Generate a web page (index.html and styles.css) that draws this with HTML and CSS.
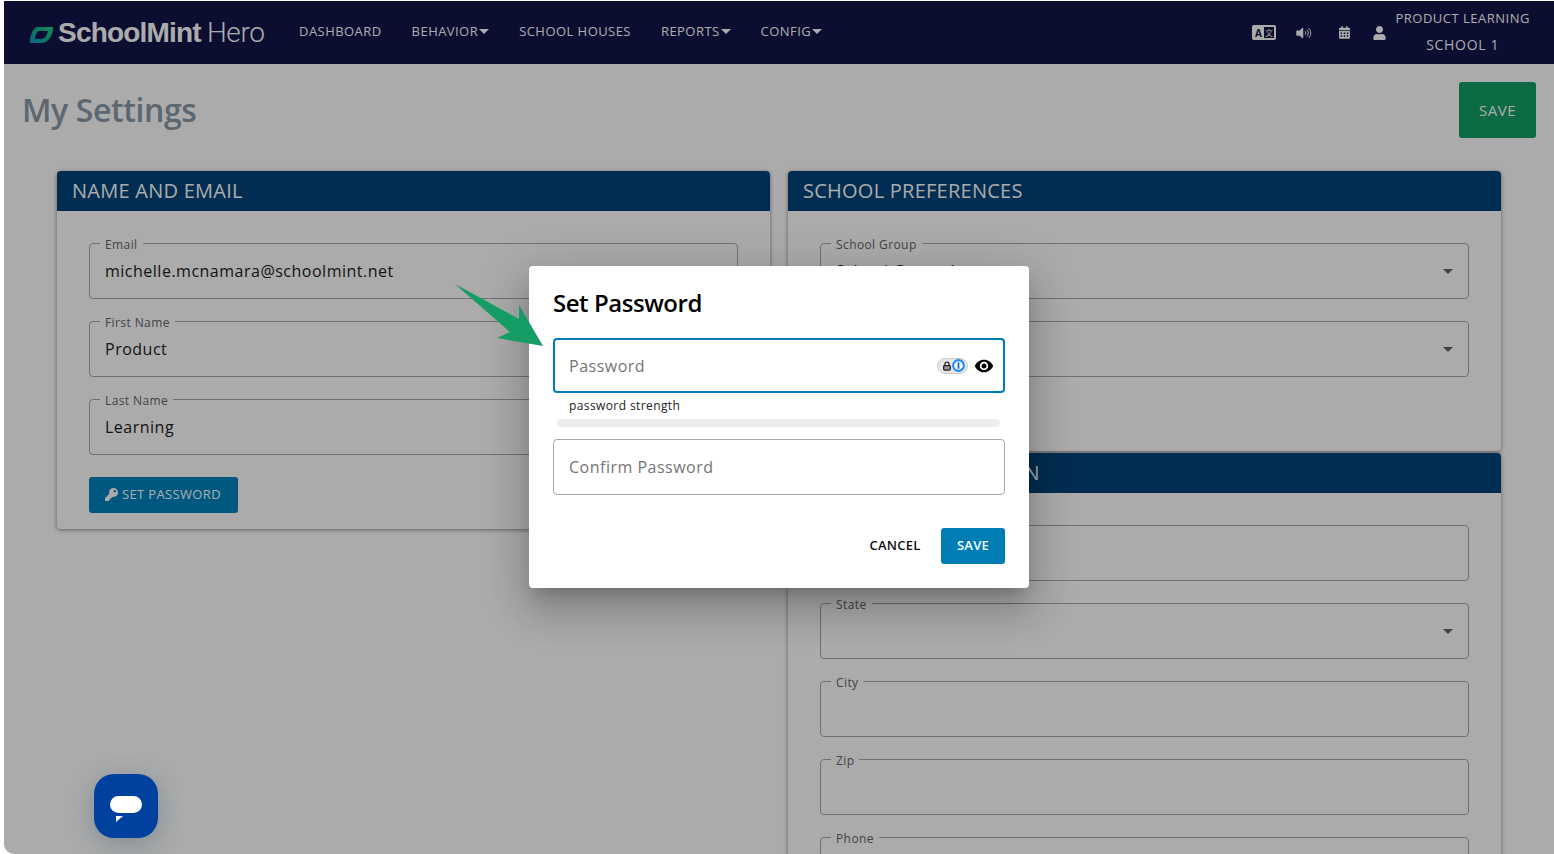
FILE: index.html
```html
<!DOCTYPE html>
<html lang="en">
<head>
  <meta charset="UTF-8" />
  <title>My Settings</title>
  <link rel="stylesheet" href="styles.css">
</head>
<body>
  <div class="window">
    <header class="topbar">
      <div class="logo">
        <svg class="leaf" viewBox="0 0 23 16">
          <defs>
            <linearGradient id="leafFill" x1="0" y1="1" x2="1" y2="0">
              <stop offset="0" stop-color="#0f9fd0"/>
              <stop offset="0.55" stop-color="#17b08c"/>
              <stop offset="1" stop-color="#1fd98f"/>
            </linearGradient>
          </defs>
          <path fill="url(#leafFill)" fill-rule="evenodd" d="M8 0H23C23 8 19 16 11 16H0C0 8 3 0 8 0ZM9 4C7 4 5.500 8 5 12H11C15 12 17 8 18 4Z"/>
        </svg>
        <span class="logo-bold">SchoolMint</span><span class="logo-light">Hero</span>
      </div>
      <nav class="nav">
        <a href="#">Dashboard</a>
        <a href="#" class="has-caret">Behavior</a>
        <a href="#">School Houses</a>
        <a href="#" class="has-caret">Reports</a>
        <a href="#" class="has-caret">Config</a>
      </nav>
      <div class="tools">
        <svg class="ico-lang" viewBox="0 0 24 15">
          <rect width="24" height="15" rx="2" fill="#fff"/>
          <rect x="12" y="2" width="10" height="11" fill="#0f1240"/>
          <text x="6.500" y="11.500" class="lang-a">A</text>
          <text x="17" y="11" class="lang-b">文</text>
        </svg>
        <svg class="ico-sound" viewBox="0 0 640 512">
          <path fill="#fff" d="M215 71L126 160H24c-13 0-24 11-24 24v144c0 13 11 24 24 24h102l89 89c15 15 41 4 41-17V88c0-21-26-32-41-17z"/>
          <path fill="none" stroke="#fff" stroke-width="36" stroke-linecap="round" d="M330 200c30 30 30 82 0 112M400 140c60 60 60 172 0 232M470 90c85 90 85 242 0 332"/>
        </svg>
        <svg class="ico-cal" viewBox="0 0 448 512">
          <path fill="#fff" d="M0 464c0 26.500 21.500 48 48 48h352c26.500 0 48-21.500 48-48V192H0zM64 256h64v56H64zm0 112h64v56H64zm128-112h64v56h-64zm0 112h64v56h-64zm128-112h64v56h-64zm0 112h64v56h-64zM400 64h-48V16c0-8.800-7.200-16-16-16h-32c-8.800 0-16 7.200-16 16v48H160V16c0-8.800-7.200-16-16-16h-32c-8.800 0-16 7.200-16 16v48H48C21.500 64 0 85.500 0 112v48h448v-48c0-26.500-21.500-48-48-48z" fill-rule="evenodd"/>
        </svg>
        <svg class="ico-user" viewBox="0 0 448 512">
          <path fill="#fff" d="M224 256c70.700 0 128-57.300 128-128S294.700 0 224 0 96 57.300 96 128s57.300 128 128 128zm89.600 32h-16.700c-22.200 10.200-46.900 16-72.900 16s-50.600-5.800-72.900-16h-16.700C60.200 288 0 348.200 0 422.400V464c0 26.500 21.500 48 48 48h352c26.500 0 48-21.500 48-48v-41.600c0-74.200-60.200-134.400-134.400-134.400z"/>
        </svg>
        <div class="account">
          <span>Product Learning</span>
          <span class="account-school">School 1</span>
        </div>
      </div>
    </header>

    <main class="page">
      <div class="title-row">
        <h1>My Settings</h1>
        <button class="btn-save-page">Save</button>
      </div>

      <div class="columns">
        <section class="panel">
          <h2>Name and Email</h2>
          <div class="panel-body">
            <div class="field"><label>Email</label><span class="value">michelle.mcnamara@schoolmint.net</span></div>
            <div class="field"><label>First Name</label><span class="value">Product</span></div>
            <div class="field"><label>Last Name</label><span class="value">Learning</span></div>
            <button class="btn-set">
              <svg class="ico-key" viewBox="0 0 512 512"><path fill="#fff" d="M512 176c0 97.200-78.800 176-176 176-11.200 0-22.200-1.100-32.800-3.100l-24 27A24 24 0 0 1 261.200 384H224v40c0 13.300-10.700 24-24 24h-40v40c0 13.300-10.700 24-24 24H24c-13.300 0-24-10.700-24-24v-78.100c0-6.400 2.500-12.500 7-17l161.800-161.800C163.100 213.800 160 195.300 160 176 160 78.800 238.800 0 336 0c97.500 0 176 78.500 176 176zM336 128c0 26.500 21.500 48 48 48s48-21.500 48-48-21.500-48-48-48-48 21.500-48 48z"/></svg>
              Set Password
            </button>
          </div>
        </section>

        <div class="right-col">
          <section class="panel">
            <h2>School Preferences</h2>
            <div class="panel-body tall">
              <div class="field select"><label>School Group</label><span class="value">School Group 1</span></div>
              <div class="field select"><label>School</label><span class="value">School 1</span></div>
            </div>
          </section>
          <section class="panel">
            <h2 class="address-head">Address Information</h2>
            <div class="panel-body">
              <div class="field"><label>Address</label></div>
              <div class="field select"><label>State</label></div>
              <div class="field"><label>City</label></div>
              <div class="field"><label>Zip</label></div>
              <div class="field"><label>Phone</label></div>
            </div>
          </section>
        </div>
      </div>
    </main>

    <div class="overlay">
      <div class="modal">
        <h3>Set Password</h3>
        <div class="pw-input">
          <span class="placeholder">Password</span>
          <span class="onepass">
            <svg class="op-lock" viewBox="0 0 12 12">
              <path fill="none" stroke="#222" stroke-width="1.500" d="M3.500 6V3.800a2.500 2.500 0 0 1 5 0V6"/>
              <rect x="2" y="5.500" width="8" height="5.500" rx="1" fill="#999" stroke="#222" stroke-width="1.500"/>
            </svg>
            <svg class="op-mark" viewBox="0 0 14 14">
              <circle cx="7" cy="7" r="5.800" fill="#fff" stroke="#1a8cff" stroke-width="2.200"/>
              <rect x="6.100" y="3.500" width="1.800" height="7" fill="#0a5cb8"/>
            </svg>
          </span>
          <svg class="ico-eye" viewBox="0 0 24 24"><path d="M12 4.500C7 4.500 2.700 7.600 1 12c1.700 4.400 6 7.500 11 7.500s9.300-3.100 11-7.500c-1.700-4.400-6-7.500-11-7.500zM12 17c-2.800 0-5-2.200-5-5s2.200-5 5-5 5 2.200 5 5-2.200 5-5 5zm0-8c-1.700 0-3 1.300-3 3s1.300 3 3 3 3-1.300 3-3-1.300-3-3-3z"/></svg>
        </div>
        <div class="strength-label">password strength</div>
        <div class="strength-bar"></div>
        <div class="pw-confirm"><span class="placeholder">Confirm Password</span></div>
        <div class="modal-actions">
          <button class="btn-cancel">Cancel</button>
          <button class="btn-modal-save">Save</button>
        </div>
      </div>
    </div>

    <!-- arrow pointing at the password box -->
    <svg class="arrow" viewBox="0 0 90 64">
      <polygon points="0,0 64,35 64,21 88,62 42,54 55,48" fill="#169c65"/>
    </svg>

    <div class="chat-btn">
      <svg viewBox="0 0 32 28" class="chat-ico">
        <rect x="0" y="0" width="32" height="17" rx="8.500" fill="#fff"/>
        <polygon points="6,20 13,20 6,26" fill="#fff"/>
      </svg>
    </div>
  </div>
</body>
</html>
```

FILE: styles.css
```css
* {
  box-sizing: border-box;
}

body {
  margin: 0;
  height: 854px;
  background: #fff;
  font-family: "Open Sans", sans-serif;
  overflow: hidden;
}

.window {
  position: relative;
  margin: 1px 0 0 4px;
  height: 853px;
  overflow: hidden;
  border-bottom-left-radius: 10px;
  background: #fff;
}

/* top bar */
.topbar {
  display: flex;
  align-items: center;
  height: 63px;
  padding: 0 24px 0 26px;
  background: #11144a;
  color: #fff;
}

.logo {
  display: flex;
  align-items: center;
  width: 269px;
  font-family: "Liberation Sans", sans-serif;
  font-size: 28px;
}

.leaf {
  width: 23px;
  height: 16px;
  margin: 4px 5px 0 0;
}

.logo-bold {
  font-weight: 700;
  letter-spacing: -0.8px;
}

.logo-light {
  margin-left: 6px;
  font-family: Roboto, sans-serif;
  font-weight: 300;
  letter-spacing: -0.4px;
}

.nav {
  display: flex;
  gap: 30px;
  margin-bottom: 3px;
}

.nav a {
  display: flex;
  align-items: center;
  color: #fff;
  font-size: 13px;
  font-weight: 400;
  letter-spacing: 0.45px;
  text-decoration: none;
  text-transform: uppercase;
}

.has-caret::after {
  content: "";
  margin: 1px 0 0 1px;
  border-top: 5px solid #fff;
  border-left: 5px solid transparent;
  border-right: 5px solid transparent;
}

.tools {
  display: flex;
  align-items: center;
  margin-left: auto;
}

.ico-lang {
  width: 24px;
  height: 15px;
  margin-right: 20px;
}

.lang-a {
  font: 700 10px "Open Sans", sans-serif;
  fill: #0f1240;
  text-anchor: middle;
}

.lang-b {
  font: 400 8px "Noto Sans CJK SC", sans-serif;
  fill: #fff;
  text-anchor: middle;
}

.ico-sound {
  width: 18px;
  height: 14px;
  margin-right: 25px;
}

.ico-cal {
  width: 11px;
  height: 13px;
  margin-right: 23px;
}

.ico-user {
  width: 13px;
  height: 14px;
  margin-right: 9px;
}

.account {
  display: flex;
  flex-direction: column;
  align-items: center;
  gap: 9px;
  margin-bottom: 2px;
  font-size: 13px;
  font-weight: 400;
  line-height: 18px;
  letter-spacing: 0.5px;
  text-transform: uppercase;
}

.account-school {
  font-size: 14px;
  letter-spacing: 0.7px;
}

/* page */
.page {
  padding: 18px 18px 0 18px;
}

.title-row {
  display: flex;
  justify-content: space-between;
  align-items: center;
}

h1 {
  margin: 0 0 2px;
  color: #8a9aa8;
  font-size: 32px;
  font-weight: 600;
  letter-spacing: -0.4px;
}

.btn-save-page {
  width: 77px;
  height: 56px;
  padding-bottom: 2px;
  border: none;
  border-radius: 3px;
  background: #14a065;
  color: #fff;
  font: 400 15px "Open Sans", sans-serif;
  letter-spacing: 0.5px;
  text-transform: uppercase;
}

.columns {
  display: grid;
  grid-template-columns: 713px 713px;
  gap: 18px;
  align-items: start;
  margin: 33px 0 0 35px;
}

.right-col {
  display: flex;
  flex-direction: column;
  gap: 2px;
}

.panel {
  border-radius: 4px;
  background: #fff;
  box-shadow: 0 1px 4px rgba(0, 0, 0, 0.45);
}

.panel h2 {
  margin: 0;
  height: 40px;
  padding: 0 15px;
  border-radius: 4px 4px 0 0;
  background: #004479;
  color: #fff;
  font-size: 20px;
  font-weight: 400;
  line-height: 40px;
  letter-spacing: 0.25px;
  text-transform: uppercase;
}

.panel h2.address-head {
  word-spacing: 3px;
}

.panel-body {
  display: flex;
  flex-direction: column;
  align-items: flex-start;
  gap: 22px;
  padding: 32px 32px 16px;
}

.panel-body.tall {
  padding-bottom: 74px;
}

.field {
  position: relative;
  display: flex;
  align-items: center;
  width: 100%;
  height: 56px;
  padding: 0 15px;
  border: 1px solid #a8a8a8;
  border-radius: 4px;
}

.field label {
  position: absolute;
  top: -6px;
  left: 10px;
  padding: 0 5px;
  background: #fff;
  color: #666;
  font-size: 12px;
  line-height: 14px;
  letter-spacing: 0.4px;
}

.value {
  color: #222;
  font-size: 16px;
  letter-spacing: 0.5px;
}

.select::after {
  content: "";
  position: absolute;
  right: 15px;
  top: 25px;
  border-top: 5px solid #666;
  border-left: 5px solid transparent;
  border-right: 5px solid transparent;
}

.btn-set {
  display: flex;
  align-items: center;
  gap: 4px;
  height: 36px;
  padding: 0 17px 2px 16px;
  border: none;
  border-radius: 3px;
  background: #0084bf;
  color: #fff;
  font: 400 13px "Open Sans", sans-serif;
  letter-spacing: 0.35px;
  text-transform: uppercase;
}

.ico-key {
  width: 13px;
  height: 13px;
}

/* modal */
.overlay {
  position: absolute;
  inset: 0;
  display: flex;
  justify-content: center;
  padding-top: 265px;
  background: rgba(0, 0, 0, 0.33);
}

.modal {
  width: 500px;
  height: 322px;
  padding: 20px 24px;
  border-radius: 4px;
  background: #fff;
  box-shadow: 0 11px 15px -7px rgba(0, 0, 0, 0.2), 0 24px 38px 3px rgba(0, 0, 0, 0.14), 0 9px 46px 8px rgba(0, 0, 0, 0.12);
}

.modal h3 {
  margin: 0 0 18px;
  color: #000;
  font-size: 24px;
  font-weight: 600;
  line-height: 34px;
  letter-spacing: -0.45px;
}

.pw-input,
.pw-confirm {
  display: flex;
  align-items: center;
  padding: 0 15px;
  border-radius: 4px;
}

.pw-input {
  height: 55px;
  padding-right: 9px;
  border: 2px solid #007db5;
  padding-left: 14px;
}

.pw-confirm {
  height: 56px;
  margin-top: 12px;
  border: 1px solid #a8a8a8;
}

.placeholder {
  color: #757575;
  font-size: 16px;
  letter-spacing: 0.5px;
}

.onepass {
  display: flex;
  align-items: center;
  justify-content: space-between;
  width: 31px;
  height: 16px;
  margin-left: auto;
  padding: 0 2px 0 4px;
  border: 1px solid #ccc;
  border-radius: 8px;
  background: #e6e6e6;
}

.op-lock {
  width: 10px;
  height: 10px;
}

.op-mark {
  width: 13px;
  height: 13px;
}

.ico-eye {
  width: 20px;
  height: 20px;
  margin-left: 6px;
}

.strength-label {
  margin: 5px 0 0 16px;
  color: #222;
  font-size: 12px;
  line-height: 16px;
  letter-spacing: 0.4px;
}

.strength-bar {
  width: 443px;
  height: 8px;
  margin: 5px 0 0 4px;
  border-radius: 4px;
  background: #eee;
}

.modal-actions {
  display: flex;
  justify-content: flex-end;
  align-items: center;
  gap: 12px;
  margin-top: 33px;
}

.btn-cancel,
.btn-modal-save {
  height: 36px;
  padding-bottom: 4px;
  border: none;
  border-radius: 3px;
  font: 600 13px "Open Sans", sans-serif;
  letter-spacing: 0.25px;
  text-transform: uppercase;
}

.btn-cancel {
  width: 68px;
  background: #fff;
  color: #111;
}

.btn-modal-save {
  width: 64px;
  background: #007db5;
  color: #fff;
}

.arrow {
  position: absolute;
  left: 451px;
  top: 283px;
  width: 90px;
  height: 64px;
}

.chat-btn {
  position: absolute;
  left: 90px;
  top: 773px;
  display: flex;
  align-items: center;
  justify-content: center;
  width: 64px;
  height: 64px;
  border-radius: 20px;
  background: #00409f;
  box-shadow: 0 6px 24px rgba(30, 70, 90, 0.3);
}

.chat-ico {
  width: 32px;
  height: 28px;
  margin-top: 8px;
}
```
